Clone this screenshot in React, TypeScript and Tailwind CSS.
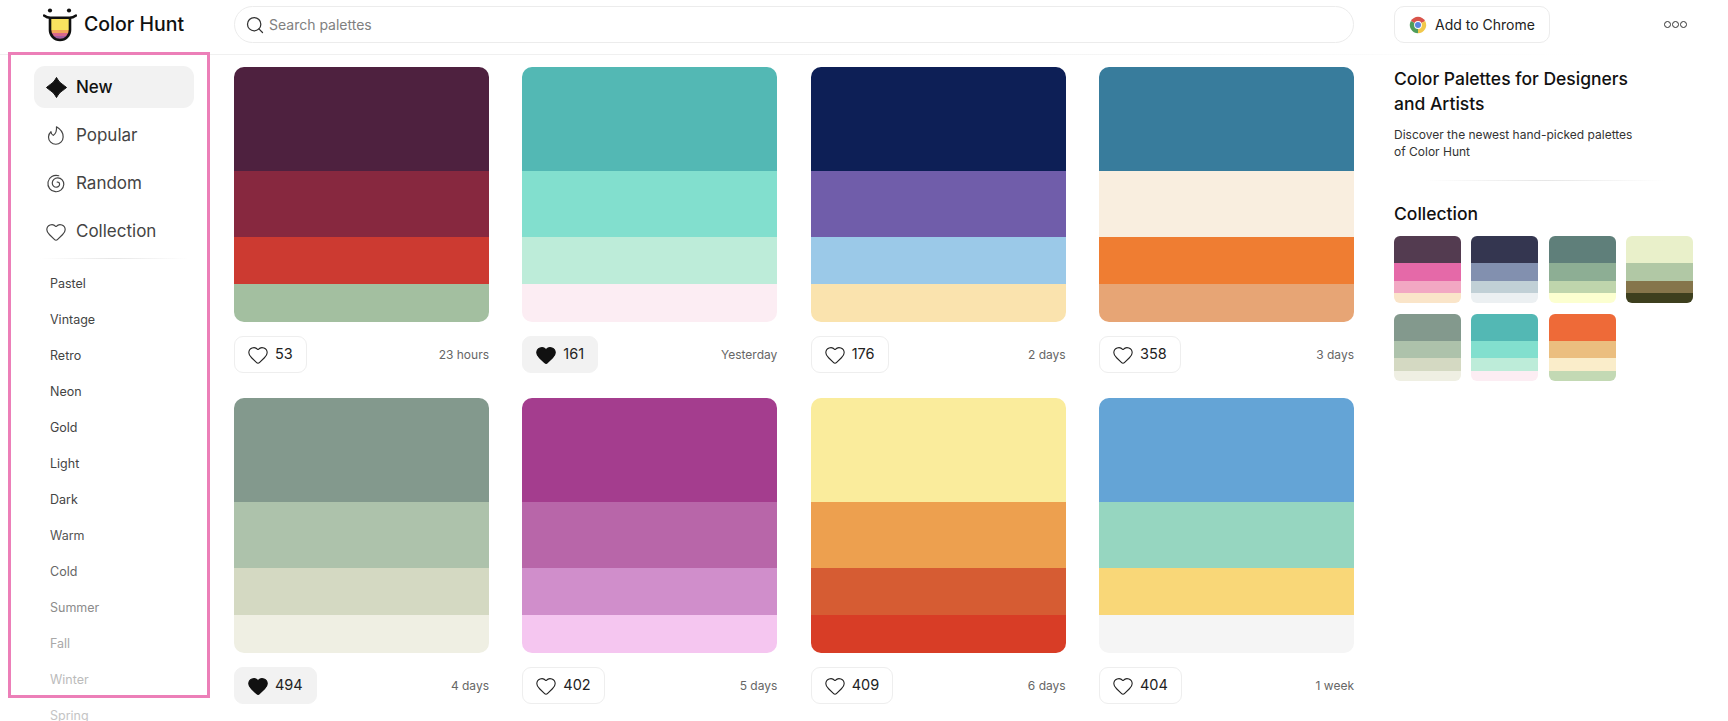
import { Heart, Search } from 'lucide-react';

const palettes = [
  { colors: ['#4e213f', '#87283f', '#cc3a31', '#a3bfa0'], likes: 53, time: '23 hours', liked: false },
  { colors: ['#53b8b4', '#82dfce', '#bdecd9', '#fcedf3'], likes: 161, time: 'Yesterday', liked: true },
  { colors: ['#0d1f56', '#705daa', '#9bc9e8', '#fae3ae'], likes: 176, time: '2 days', liked: false },
  { colors: ['#387c9c', '#f9eedf', '#ef7d32', '#e7a575'], likes: 358, time: '3 days', liked: false },
  { colors: ['#83998d', '#adc2ab', '#d4d9c2', '#efefe3'], likes: 494, time: '4 days', liked: true },
  { colors: ['#a43d8e', '#b866a9', '#d08ecb', '#f5c6f0'], likes: 402, time: '5 days', liked: false },
  { colors: ['#faec9c', '#eda04f', '#d65c33', '#d83d26'], likes: 409, time: '6 days', liked: false },
  { colors: ['#64a4d6', '#96d6c0', '#f9d778', '#f5f5f5'], likes: 404, time: '1 week', liked: false },
];

const collection = [
  ['#533b50', '#e569a8', '#f2a8c3', '#fae5c9'],
  ['#343650', '#8290af', '#c1d0d6', '#ecf0f2'],
  ['#5f7f7a', '#8dae94', '#bfd5ac', '#fcffd0'],
  ['#e9f0ca', '#b1c8a5', '#85754b', '#3d3f1e'],
  ['#83998d', '#adc2ab', '#d4d9c2', '#efefe3'],
  ['#53b8b4', '#82dfce', '#bdecd9', '#fcedf3'],
  ['#ee6a38', '#ebbe7f', '#faedca', '#c3d9b4'],
];

const tags = [
  { name: 'Pastel', cls: 'text-[#444]' },
  { name: 'Vintage', cls: 'text-[#444]' },
  { name: 'Retro', cls: 'text-[#444]' },
  { name: 'Neon', cls: 'text-[#444]' },
  { name: 'Gold', cls: 'text-[#444]' },
  { name: 'Light', cls: 'text-[#444]' },
  { name: 'Dark', cls: 'text-[#444]' },
  { name: 'Warm', cls: 'text-[#555]' },
  { name: 'Cold', cls: 'text-[#666]' },
  { name: 'Summer', cls: 'text-[#8c8c8c]' },
  { name: 'Fall', cls: 'text-[#a8a8a8]' },
  { name: 'Winter', cls: 'text-[#bbb]' },
  { name: 'Spring', cls: 'text-[#c4c4c4]' },
];

function Logo() {
  return (
    <svg width="34" height="34" viewBox="0 0 34 34" fill="none">
      <defs>
        <clipPath id="tongue">
          <path d="M6.500 9h21v13a10.500 10.500 0 0 1-21 0z" />
        </clipPath>
      </defs>
      <g clipPath="url(#tongue)">
        <rect x="6" y="8" width="22" height="14" fill="#f9e25f" />
        <rect x="6" y="22" width="22" height="3" fill="#f2a65a" />
        <rect x="6" y="25" width="22" height="3" fill="#d9688c" />
        <rect x="6" y="28" width="22" height="6" fill="#a65fa0" />
      </g>
      <path d="M7 9v13a10 10 0 0 0 20 0V9" stroke="#111" strokeWidth="2.600" />
      <path d="M1 7.500c2 1.500 4 2.300 6.500 2.300h19c2.500 0 4.500-.8 6.500-2.300" stroke="#111" strokeWidth="2.400" strokeLinecap="round" />
      <circle cx="7" cy="2.500" r="2.100" fill="#111" />
      <circle cx="26" cy="2.500" r="2.100" fill="#111" />
    </svg>
  );
}

function ChromeIcon() {
  return (
    <svg width="18" height="18" viewBox="0 0 24 24">
      <path d="M12 12 21.500 6.500A11 11 0 0 0 2.500 6.500z" fill="#d9534a" />
      <path d="M12 12 2.500 6.500A11 11 0 0 0 12 23z" fill="#4f9d5b" />
      <path d="M12 12 12 23A11 11 0 0 0 21.500 6.500z" fill="#f1c84b" />
      <circle cx="12" cy="12" r="5.200" fill="#fff" />
      <circle cx="12" cy="12" r="4" fill="#5b85e0" />
    </svg>
  );
}

function SparkIcon() {
  return (
    <svg width="23" height="23" viewBox="0 0 24 24" fill="#111">
      <path d="M12 1.500c1.100 1.800 2 3.500 3.500 5s3.300 2.400 7 5.500c-3.700 3.100-5.500 4-7 5.500s-2.400 3.200-3.500 5c-1.100-1.800-2-3.500-3.500-5S5.200 15.100 1.500 12c3.700-3.100 5.500-4 7-5.500s2.400-3.200 3.500-5z" stroke="#111" strokeWidth="1" strokeLinejoin="round" />
    </svg>
  );
}

function FlameIcon() {
  return (
    <svg width="22" height="22" viewBox="0 0 24 24" fill="none" stroke="#444" strokeWidth="1.300" strokeLinejoin="round">
      <path d="M12.500 2c4.500 2.500 7.300 6.500 7.300 11a8 8 0 1 1-16 0c0-2.300 1-4.200 2.700-5.700.2 2 1 3.400 2.600 4 2.500-2 3.900-5.500 3.400-9.300z" />
    </svg>
  );
}

function SpiralIcon() {
  return (
    <svg width="22" height="22" viewBox="0 0 24 24" fill="none" stroke="#444" strokeWidth="1.300" strokeLinecap="round">
      <path d="M15 3C9.500 1.500 4.200 4.500 3.300 9.800c-.9 5.400 2.800 10.200 8 10.600 4.800.4 8.900-3 9.200-7.800.2-3.900-2.700-7.100-6.500-7.200-3.400-.1-6 2.400-6.100 5.500 0 2.800 2.200 4.800 4.700 4.600 2-.1 3.500-1.800 3.300-3.600-.1-1.300-1.300-2.300-2.600-2" />
    </svg>
  );
}

function Palette({ colors, large }: { colors: string[]; large?: boolean }) {
  return (
    <div
      className={
        large
          ? 'grid h-[255px] grid-rows-[104fr_66fr_47fr_38fr] overflow-hidden rounded-[10px]'
          : 'grid h-[67px] grid-rows-[104fr_66fr_47fr_38fr] overflow-hidden rounded-[6px]'
      }
    >
      {colors.map((c) => (
        <div key={c} style={{ backgroundColor: c }} />
      ))}
    </div>
  );
}

function LikeButton({ likes, liked }: { likes: number; liked: boolean }) {
  return (
    <button
      className={
        liked
          ? 'flex h-[37px] items-center gap-[6px] rounded-[9px] border border-[#f2f2f2] bg-[#f2f2f2] pl-[12px] pr-[13px]'
          : 'flex h-[37px] items-center gap-[6px] rounded-[9px] border border-[#eeeeee] bg-white pl-[12px] pr-[13px]'
      }
    >
      {liked ? (
        <Heart size={22} fill="#111" stroke="#111" strokeWidth={1.400} />
      ) : (
        <Heart size={22} stroke="#222" strokeWidth={1.200} />
      )}
      <span className="text-[14.500px] leading-none text-[#222]">{likes}</span>
    </button>
  );
}

function Sidebar() {
  return (
    <aside className="flex w-[234px] shrink-0 flex-col pl-[34px] pr-[40px] pt-[11px]">
      <nav className="flex flex-col gap-[6px]">
        <a className="flex h-[42px] items-center gap-[8px] rounded-[11px] bg-[#f2f2f2] pl-[11px] pt-[1px] text-[17px] font-medium text-[#111]">
          <SparkIcon />
          New
        </a>
        <a className="flex h-[42px] items-center gap-[9px] rounded-[11px] pl-[11px] pt-[1px] text-[17px] text-[#444]">
          <FlameIcon />
          Popular
        </a>
        <a className="flex h-[42px] items-center gap-[9px] rounded-[11px] pl-[11px] pt-[1px] text-[17px] text-[#444]">
          <SpiralIcon />
          Random
        </a>
        <a className="flex h-[42px] items-center gap-[9px] rounded-[11px] pl-[11px] pt-[1px] text-[17px] text-[#444]">
          <Heart size={22} stroke="#444" strokeWidth={1.300} />
          Collection
        </a>
      </nav>
      <div className="mx-[6px] mt-[6px] h-px bg-gradient-to-r from-transparent via-[#e6e6e6] to-transparent" />
      <ul className="mt-[7px] flex flex-col pl-[16px]">
        {tags.map((t) => (
          <li key={t.name} className={`flex h-[36px] shrink-0 items-center text-[12.500px] ${t.cls}`}>
            {t.name}
          </li>
        ))}
      </ul>
    </aside>
  );
}

function RightPanel() {
  return (
    <aside className="w-[334px] shrink-0 pl-[40px] pt-[11px]">
      <h2 className="w-[250px] text-[17.500px] font-medium leading-[25px] text-[#111]">
        Color Palettes for Designers and Artists
      </h2>
      <p className="mt-[11px] w-[245px] text-[12px] leading-[16.500px] text-[#333]">
        Discover the newest hand-picked palettes of Color Hunt
      </p>
      <div className="ml-[31px] mt-[20px] h-px w-[240px] bg-gradient-to-r from-transparent via-[#e6e6e6] to-transparent" />
      <h2 className="mt-[20px] text-[17.500px] font-medium leading-[25px] text-[#111]">Collection</h2>
      <div className="mt-[10px] grid w-[300px] grid-cols-[67px_67px_67px_67px] gap-x-[10.300px] gap-y-[10.500px]">
        {collection.map((colors) => (
          <Palette key={colors[0]} colors={colors} />
        ))}
      </div>
    </aside>
  );
}

export default function App() {
  return (
    <div className="relative h-[721px] overflow-hidden bg-white font-['Inter',sans-serif]">
      <header className="flex h-[54px] items-center">
        <div className="flex w-[234px] shrink-0 items-center gap-[7px] pb-[4px] pl-[43px]">
          <Logo />
          <span className="text-[19.500px] font-medium text-[#111]">Color Hunt</span>
        </div>
        <div className="mb-[5px] flex h-[37px] w-[1120px] shrink-0 items-center gap-[4px] rounded-full border border-[#ececec] pl-[10px] text-[14px] text-[#808080]">
          <Search size={20} stroke="#333" strokeWidth={1.500} />
          Search palettes
        </div>
        <button className="mb-[5px] ml-[40px] flex h-[37px] w-[156px] shrink-0 items-center gap-[8px] rounded-[10px] border border-[#ececec] pl-[14px] text-[14px] text-[#222]">
          <ChromeIcon />
          Add to Chrome
        </button>
        <div className="mb-[5px] ml-[114px] flex gap-[1px]">
          <span className="h-[7px] w-[7px] rounded-full border border-[#333]" />
          <span className="h-[7px] w-[7px] rounded-full border border-[#333]" />
          <span className="h-[7px] w-[7px] rounded-full border border-[#333]" />
        </div>
      </header>
      <div className="h-px w-[1590px] bg-gradient-to-r from-[#f0f0f0] via-[#f0f0f0] to-transparent" />
      <div className="flex">
        <Sidebar />
        <main className="grid w-[1120px] shrink-0 grid-cols-4 content-start gap-x-[33.330px] gap-y-[25px] pt-[12px]">
          {palettes.map((p) => (
            <article key={p.likes}>
              <Palette colors={p.colors} large />
              <div className="mt-[14px] flex h-[37px] items-center justify-between">
                <LikeButton likes={p.likes} liked={p.liked} />
                <span className="text-[12px] text-[#666]">{p.time}</span>
              </div>
            </article>
          ))}
        </main>
        <RightPanel />
      </div>
      {/* pink annotation frame around the sidebar */}
      <div className="pointer-events-none absolute left-[8px] top-[52px] h-[646px] w-[202px] border-[3px] border-[#ec7fb8]" />
    </div>
  );
}
